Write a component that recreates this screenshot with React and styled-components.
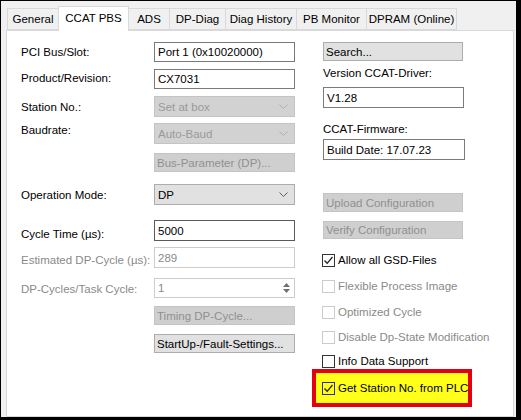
import React from "react";
import styled, { createGlobalStyle } from "styled-components";

const Global = createGlobalStyle`
  html, body { margin: 0; padding: 0; background: #fff; overflow: hidden; }
  * { box-sizing: border-box; }
`;

const FONT = `"Liberation Sans", Arial, sans-serif`;

const Frame = styled.div`
  width: 521px;
  height: 420px;
  border-style: solid;
  border-color: #000;
  border-width: 1px 5px 3px 1px;
  background: #f0f0f0;
  display: flex;
  flex-direction: column;
  overflow: hidden;
  font-family: ${FONT};
  font-size: 11.5px;
  color: #000;
`;

const TabStrip = styled.div`
  display: flex;
  align-items: flex-end;
  height: 29px;
  padding-left: 6px;
  position: relative;
  z-index: 2;
`;

const Tab = styled.div`
  width: ${(p) => p.$w}px;
  height: ${(p) => (p.$active ? 25 : 22)}px;
  margin-left: -1px;
  margin-bottom: ${(p) => (p.$active ? -1 : 0)}px;
  border: 1px solid #d9d9d9;
  border-bottom: ${(p) => (p.$active ? "none" : "1px solid #d9d9d9")};
  background: ${(p) => (p.$active ? "#fff" : "#f0f0f0")};
  display: flex;
  align-items: center;
  justify-content: center;
  padding-bottom: ${(p) => (p.$active ? 3 : 0)}px;
  white-space: nowrap;
  z-index: ${(p) => (p.$active ? 2 : 1)};
  &:first-child { margin-left: 0; }
`;

const Panel = styled.div`
  flex: 1;
  margin: 0 2px 0 5px;
  background: #fff;
  border: 1px solid #d9d9d9;
  display: flex;
  padding: 11px 0 0 14px;
  gap: 28px;
`;

const LeftCol = styled.div`
  width: 274px;
  display: flex;
  flex-direction: column;
`;

const RightCol = styled.div`
  width: 142px;
  display: flex;
  flex-direction: column;
`;

const Row = styled.div`
  display: flex;
  align-items: center;
  margin-top: ${(p) => p.$mt || 0}px;
`;

const Label = styled.div`
  width: 133px;
  flex: none;
  white-space: nowrap;
  color: ${(p) => (p.$disabled ? "#8a8a8a" : "#000")};
  margin-top: ${(p) => (p.$shift > 0 ? p.$shift * 2 : 0)}px;
  margin-bottom: ${(p) => (p.$shift < 0 ? -p.$shift * 2 : 0)}px;
`;

const Spacer = styled.div`
  width: 133px;
  flex: none;
`;

const TextBox = styled.div`
  width: ${(p) => p.$w || 141}px;
  height: ${(p) => p.$h || 20}px;
  margin-top: ${(p) => p.$mt || 0}px;
  border: 1px solid ${(p) => (p.$disabled ? "#cccccc" : p.$dark ? "#5a5a5a" : "#7a7a7a")};
  background: #fff;
  color: ${(p) => (p.$disabled ? "#8a8a8a" : "#000")};
  display: flex;
  align-items: center;
  padding-left: 3px;
  white-space: nowrap;
  flex: none;
`;

const Combo = styled.div`
  width: 141px;
  height: 21px;
  border: 1px solid ${(p) => (p.$disabled ? "#c4c4c4" : "#adadad")};
  background: ${(p) => (p.$disabled ? "#d2d2d2" : "#e1e1e1")};
  color: ${(p) => (p.$disabled ? "#9a9a9a" : "#000")};
  display: flex;
  align-items: center;
  justify-content: space-between;
  padding: 0 6px 0 3px;
  flex: none;
`;

const Button = styled.div`
  width: ${(p) => p.$w || 141}px;
  height: ${(p) => p.$h || 19}px;
  margin-top: ${(p) => p.$mt || 0}px;
  border: 1px solid ${(p) => (p.$disabled ? "#c4c4c4" : "#adadad")};
  background: ${(p) => (p.$disabled ? "#cfcfcf" : "#e1e1e1")};
  color: ${(p) => (p.$disabled ? "#909090" : "#000")};
  display: flex;
  align-items: center;
  padding-left: 2px;
  white-space: nowrap;
  flex: none;
`;

const SpinBox = styled(TextBox)`
  justify-content: space-between;
  padding-right: 0;
`;

const SpinArrows = styled.div`
  width: 16px;
  height: 100%;
  display: flex;
  flex-direction: column;
  align-items: center;
  justify-content: center;
  gap: 2px;
`;

const SideLabel = styled.div`
  margin-top: ${(p) => p.$mt || 0}px;
  line-height: 15px;
  white-space: nowrap;
`;

const CheckRow = styled.div`
  display: flex;
  align-items: center;
  height: 16px;
  margin-top: ${(p) => p.$mt || 0}px;
  margin-left: -1px;
  color: ${(p) => (p.$disabled ? "#8a8a8a" : "#000")};
  white-space: nowrap;
`;

const Box = styled.div`
  width: 13px;
  height: 13px;
  border: 1px solid ${(p) => (p.$disabled ? "#cccccc" : "#333")};
  background: #fff;
  margin-right: 3px;
  flex: none;
  display: flex;
  align-items: center;
  justify-content: center;
`;

const Highlight = styled.div`
  width: 160px;
  height: 38px;
  margin-left: -11px;
  border: 4px solid #e3000f;
  background: #ffff1a;
  display: flex;
  align-items: center;
  padding-left: 6px;
  & > div { margin-left: 0; }
  & ${Box} { background: transparent; }
`;

const Chevron = () => (
  <svg width="9" height="5" viewBox="0 0 9 5">
    <polyline points="0.5,0.5 4.5,4.5 8.5,0.5" fill="none" stroke="currentColor" strokeWidth="1" />
  </svg>
);

const ChevronWrap = styled.span`
  color: ${(p) => (p.$disabled ? "#b0b0b0" : "#606060")};
  display: flex;
`;

const Check = () => (
  <svg width="11" height="11" viewBox="0 0 11 11">
    <polyline points="1.5,5.5 4.2,8.3 9.5,2" fill="none" stroke="#222" strokeWidth="1.3" />
  </svg>
);

const Checkbox = ({ checked, disabled, children, mt }) => (
  <CheckRow $disabled={disabled} $mt={mt}>
    <Box $disabled={disabled}>{checked && <Check />}</Box>
    {children}
  </CheckRow>
);

const tabs = [
  ["General", 52],
  ["CCAT PBS", 71, true],
  ["ADS", 42],
  ["DP-Diag", 57],
  ["Diag History", 72],
  ["PB Monitor", 71],
  ["DPRAM (Online)", 91],
];

export default function App() {
  return (
    <>
      <Global />
      <Frame>
        <TabStrip>
          {tabs.map(([t, w, a]) => (
            <Tab key={t} $w={w} $active={a}>
              {t}
            </Tab>
          ))}
        </TabStrip>
        <Panel>
          <LeftCol>
            <Row>
              <Label>PCI Bus/Slot:</Label>
              <TextBox>Port 1 (0x10020000)</TextBox>
            </Row>
            <Row $mt={7}>
              <Label $shift={-1}>Product/Revision:</Label>
              <TextBox>CX7031</TextBox>
            </Row>
            <Row $mt={7}>
              <Label>Station No.:</Label>
              <Combo $disabled>
                Set at box
                <ChevronWrap $disabled><Chevron /></ChevronWrap>
              </Combo>
            </Row>
            <Row $mt={6}>
              <Label $shift={-4}>Baudrate:</Label>
              <Combo $disabled>
                Auto-Baud
                <ChevronWrap $disabled><Chevron /></ChevronWrap>
              </Combo>
            </Row>
            <Row $mt={9}>
              <Spacer />
              <Button $disabled>Bus-Parameter (DP)...</Button>
            </Row>
            <Row $mt={12}>
              <Label>Operation Mode:</Label>
              <Combo>
                DP
                <ChevronWrap><Chevron /></ChevronWrap>
              </Combo>
            </Row>
            <Row $mt={15}>
              <Label $shift={3}>Cycle Time (µs):</Label>
              <TextBox $h={21} $dark>5000</TextBox>
            </Row>
            <Row $mt={6}>
              <Label $shift={2} $disabled>Estimated DP-Cycle (µs):</Label>
              <TextBox $h={21} $disabled>289</TextBox>
            </Row>
            <Row $mt={10}>
              <Label $shift={1} $disabled>DP-Cycles/Task Cycle:</Label>
              <SpinBox $disabled>
                1
                <SpinArrows>
                  <svg width="7" height="4" viewBox="0 0 7 4"><polygon points="0,4 3.5,0 7,4" fill="#707070" /></svg>
                  <svg width="7" height="4" viewBox="0 0 7 4"><polygon points="0,0 3.5,4 7,0" fill="#707070" /></svg>
                </SpinArrows>
              </SpinBox>
            </Row>
            <Row $mt={8}>
              <Spacer />
              <Button $disabled>Timing DP-Cycle...</Button>
            </Row>
            <Row $mt={9}>
              <Spacer />
              <Button>StartUp-/Fault-Settings...</Button>
            </Row>
          </LeftCol>
          <RightCol>
            <Button $w={140}>Search...</Button>
            <SideLabel $mt={5}>Version CCAT-Driver:</SideLabel>
            <TextBox $w={141} $h={21} $mt={6}>V1.28</TextBox>
            <SideLabel $mt={14}>CCAT-Firmware:</SideLabel>
            <TextBox $w={142} $h={21} $mt={2}>Build Date: 17.07.23</TextBox>
            <Button $w={140} $mt={33} $disabled>Upload Configuration</Button>
            <Button $w={140} $h={18} $mt={9} $disabled>Verify Configuration</Button>
            <Checkbox checked mt={13}>Allow all GSD-Files</Checkbox>
            <Checkbox disabled mt={10}>Flexible Process Image</Checkbox>
            <Checkbox disabled mt={10}>Optimized Cycle</Checkbox>
            <Checkbox disabled mt={9}>Disable Dp-State Modification</Checkbox>
            <Checkbox mt={8}>Info Data Support</Checkbox>
            <Highlight>
              <Checkbox checked>Get Station No. from PLC</Checkbox>
            </Highlight>
          </RightCol>
        </Panel>
      </Frame>
    </>
  );
}
